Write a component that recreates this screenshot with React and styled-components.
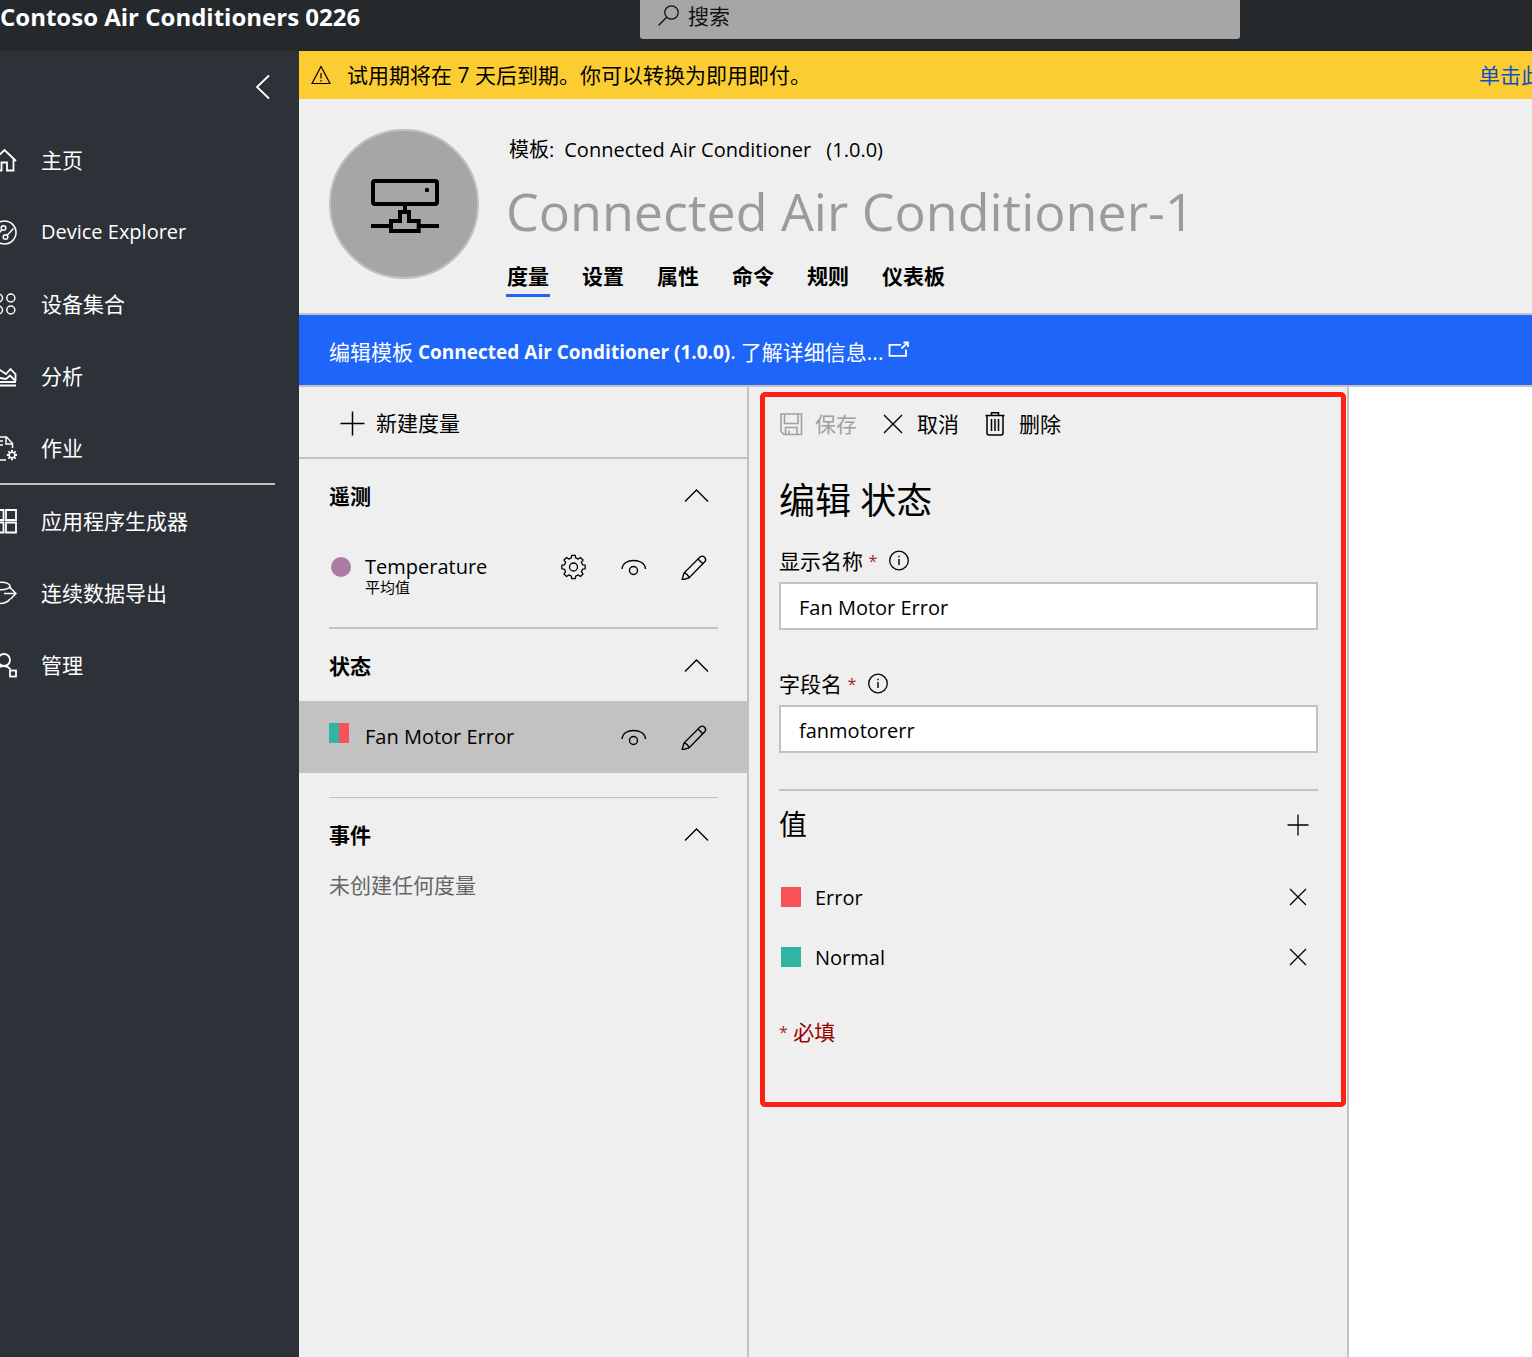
import React from "react";
import styled, { createGlobalStyle } from "styled-components";

const cjk = '"Noto Sans CJK SC", sans-serif';
const line = "#c2c2c2";

const GlobalStyle = createGlobalStyle`
  *, *::before, *::after { box-sizing: border-box; }
  body { margin: 0; background: #fff; color: #000; font: 20px/28px "Open Sans", ${cjk}; }
  button, input { font: inherit; color: inherit; }
  h1, h2, h3, p, ul { margin: 0; padding: 0; font-weight: 400; }
  ul { list-style: none; }
  a { color: inherit; text-decoration: none; }
  svg { display: block; flex: none; }
`;

const Page = styled.div`
  display: flex;
  flex-direction: column;
  min-height: 100vh;
  overflow: hidden;
`;

const TopBar = styled.header`
  display: grid;
  grid-template-columns: 640px minmax(0, 600px) 1fr;
  height: 51px;
  background: #25292c;
  color: #fff;
`;

const AppName = styled.h1`
  font-size: 24px;
  line-height: 34px;
  font-weight: 700;
  white-space: nowrap;
`;

const Search = styled.label`
  display: flex;
  align-items: center;
  gap: 9px;
  height: 39px;
  padding: 0 18px 8px;
  border-radius: 0 0 3px 3px;
  background: #a6a6a6;
  color: #111;
`;

const SearchInput = styled.input`
  flex: 1;
  min-width: 0;
  padding: 0;
  border: 0;
  outline: 0;
  background: none;
  font-size: 21px;
  &::placeholder { color: #111; opacity: 1; }
`;

const Shell = styled.div`
  display: flex;
  flex: 1;
`;

const Sidebar = styled.nav`
  flex: 0 0 299px;
  background: #2d3138;
  color: #fff;
`;

const Collapse = styled.button`
  display: flex;
  align-items: center;
  justify-content: flex-end;
  width: 100%;
  height: 73px;
  padding: 0 28px 2px;
  border: 0;
  background: none;
`;

const NavGroup = styled.ul`
  & + & {
    width: 275px;
    margin-top: -1px;
    border-top: 2px solid ${line};
  }
`;

const NavLink = styled.a`
  display: flex;
  align-items: center;
  gap: 24px;
  height: 72px;
  font-size: ${(p) => (p.$latin ? 20 : 21)}px;
`;

const NavIcon = styled.span`
  display: flex;
  justify-content: flex-end;
  width: 17px;
  overflow: hidden;
`;

const Main = styled.main`
  display: flex;
  flex-direction: column;
  flex: 1;
  min-width: 0;
`;

const Banner = styled.div`
  display: flex;
  align-items: center;
  gap: 16px;
  height: 48px;
  padding-left: 12px;
  overflow: hidden;
  background: #fccd32;
  font-size: 21px;
  white-space: nowrap;
`;

const BannerText = styled.p`
  flex: 1;
`;

const BannerLink = styled.a`
  flex: 0 0 53px;
  overflow: hidden;
  color: #0b50c4;
`;

const DeviceHeader = styled.section`
  display: flex;
  gap: 27px;
  height: 216px;
  padding: 30px 30px 0;
  border-bottom: 2px solid ${line};
  background: #efefef;
`;

const Avatar = styled.div`
  display: grid;
  place-items: center;
  flex: 0 0 150px;
  height: 150px;
  padding: 4px 0 0 2px;
  border: 2px solid #c2c2c2;
  border-radius: 50%;
  background: #a6a6a6;
`;

const DeviceInfo = styled.div`
  min-width: 0;
`;

const Template = styled.p`
  display: flex;
  gap: 10px;
  padding: 7px 3px 0;
`;

const DeviceName = styled.h2`
  margin-top: 12px;
  color: #9b9b9b;
  font-size: 52px;
  line-height: 70px;
  white-space: nowrap;
`;

const Tabs = styled.div`
  display: flex;
  gap: 31px;
  margin-top: 16px;
`;

const Tab = styled.button`
  height: 35px;
  padding: 0 1px 4px;
  border: 0;
  border-bottom: 3px solid ${(p) => (p.$active ? "#1d66f9" : "transparent")};
  background: none;
  font-size: 21px;
  font-weight: 700;
`;

const Notice = styled.p`
  display: flex;
  align-items: center;
  gap: 5px;
  height: 72px;
  padding: 3px 30px 0;
  border-bottom: 2px solid ${line};
  background: #1d66f9;
  color: #fff;
  font-size: 21px;
  white-space: nowrap;
`;

const TemplateName = styled.b`
  font-size: 19px;
  font-weight: 700;
`;

const NoticeLink = styled.a`
  display: flex;
  align-items: center;
  gap: 5px;
`;

const Columns = styled.div`
  display: flex;
  flex: 1;
`;

const Measures = styled.section`
  flex: 0 0 450px;
  border-right: 2px solid ${line};
  background: #efefef;
`;

const NewMeasure = styled.button`
  display: flex;
  align-items: center;
  gap: 11px;
  width: 100%;
  height: 72px;
  padding: 2px 0 0 41px;
  border: 0;
  border-bottom: 2px solid ${line};
  background: none;
  font-size: 21px;
`;

const Divider = styled.hr`
  margin: 24px 29px 0 30px;
  border: 0;
  border-top: ${(p) => (p.$thin ? 1 : 2)}px solid ${line};
`;

const SectionToggle = styled.button`
  display: flex;
  align-items: center;
  justify-content: space-between;
  width: 100%;
  height: 72px;
  padding: 2px 38px 0 30px;
  border: 0;
  background: none;
  font-size: 21px;
  font-weight: 700;
`;

const MeasureRow = styled.div`
  display: flex;
  align-items: flex-start;
  height: 72px;
  padding: 22px 40px 0 30px;
  background: ${(p) => (p.$selected ? "#c2c2c2" : "none")};
`;

const Marker = styled.span`
  flex: 0 0 20px;
  height: 20px;
  margin: ${(p) => (p.$round ? "4px 14px 0 2px" : "0 16px 0 0")};
  border-radius: ${(p) => (p.$round ? "50%" : 0)};
  background: ${(p) => p.$fill};
`;

const MeasureName = styled.div`
  flex: 1;
`;

const Aggregate = styled.p`
  margin-top: -4px;
  font-size: 15px;
  line-height: 20px;
`;

const RowActions = styled.div`
  display: flex;
  gap: 34px;
`;

const IconButton = styled.button`
  display: grid;
  place-items: center;
  width: 26px;
  height: 28px;
  padding: 0;
  border: 0;
  background: none;
`;

const Empty = styled.p`
  padding: 1px 30px;
  color: #666;
  font-size: 21px;
`;

const EditPanel = styled.section`
  flex: 0 1 600px;
  padding: 5px 1px 5px 11px;
  border-right: 2px solid ${line};
  background: #efefef;
`;

const Highlight = styled.form`
  padding: 0 23px 56px 14px;
  border: 5px solid #ff2012;
  border-radius: 5px;
`;

const Toolbar = styled.div`
  display: flex;
  gap: 24px;
`;

const ToolButton = styled.button`
  display: flex;
  align-items: center;
  gap: 12px;
  height: 54px;
  padding: 0 0 1px;
  border: 0;
  background: none;
  font-size: 21px;
  &:disabled { color: #a0a0a0; }
`;

const PanelTitle = styled.h2`
  margin: 26px 0 22px;
  font-size: 36px;
  line-height: 48px;
`;

const Fields = styled.div`
  display: grid;
  gap: 40px;
  padding-bottom: 36px;
  border-bottom: 2px solid ${line};
`;

const FieldLabel = styled.div`
  display: flex;
  align-items: center;
  gap: 11px;
  height: 28px;
  margin-bottom: 7px;
  font-size: 21px;
`;

const Star = styled.span`
  color: #a4262c;
  font-size: 16px;
  line-height: 16px;
  vertical-align: 2px;
`;

const TextInput = styled.input`
  display: block;
  width: 100%;
  height: 48px;
  padding: 2px 18px 0;
  border: 2px solid ${line};
  background: #fff;
  outline: 0;
`;

const ValuesHeader = styled.div`
  display: flex;
  align-items: center;
  justify-content: space-between;
  height: 68px;
  margin-bottom: 8px;
  padding-right: 7px;
`;

const ValuesTitle = styled.h3`
  padding-bottom: 2px;
  font-size: 28px;
`;

const ValueRow = styled.li`
  display: flex;
  align-items: center;
  height: 60px;
  padding: 0 7px 0 2px;
`;

const ValueSwatch = styled.span`
  flex: 0 0 20px;
  height: 20px;
  margin-right: 14px;
  background: ${(p) => p.$fill};
`;

const ValueName = styled.span`
  flex: 1;
  padding-top: 2px;
`;

const Required = styled.p`
  margin-top: 31px;
  color: #990000;
  font-size: 21px;
`;

function Icon({ size = 26, stroke = 1.5, children, ...rest }) {
  return (
    <svg width={size} height={size} viewBox={`0 0 ${size} ${size}`} fill="none" stroke="currentColor" strokeWidth={stroke} aria-hidden="true" {...rest}>
      {children}
    </svg>
  );
}

const cogPoints = (cx, cy, ro, ri, n) => {
  const pts = [];
  const step = (Math.PI * 2) / n;
  for (let i = 0; i < n; i++) {
    const a = i * step;
    [[-0.3, ri], [-0.2, ro], [0.2, ro], [0.3, ri]].forEach(([o, r]) => {
      pts.push(`${(cx + r * Math.sin(a + o * step)).toFixed(2)},${(cy - r * Math.cos(a + o * step)).toFixed(2)}`);
    });
  }
  return pts.join(" ");
};

const navIcons = {
  home: <path d="M1 13 L12.500 2 L24 13 M4 10.500 V22.500 H9.500 V14.500 H15 V22.500 H21.500 V10.500" strokeWidth="1.800" />,
  explorer: (
    <>
      <circle cx="12.500" cy="12.500" r="11.500" />
      <circle cx="11.500" cy="8" r="2.300" />
      <circle cx="13.500" cy="17" r="2.300" />
      <path d="M15.200 15.300 L21.500 8.500 M10 9.800 L4 16" />
    </>
  ),
  sets: (
    <>
      <circle cx="6.500" cy="6" r="4" />
      <circle cx="18.800" cy="6" r="4" />
      <circle cx="6.500" cy="18" r="4" />
      <circle cx="18.800" cy="18" r="4" />
    </>
  ),
  analytics: (
    <>
      <path d="M1 12 L8 6 L14 10 L18.500 5 L23.500 10 V17 M1 17 V12" strokeWidth="1.800" />
      <path d="M1 17 L8 14 L14 15 L18 11.500 L23 16.500 M0 18 H24 M0 21.500 H24" strokeWidth="1.800" />
    </>
  ),
  jobs: (
    <>
      <path d="M2 24 V1 H14.500 L20.500 7.500 V12 M14 1 V8 H20.500 M5 5 H11 M5 9 H11 M2 24 H14" />
      <circle cx="20" cy="19" r="2.800" />
      <path d="M20 13.800 V16 M20 22 V24.200 M14.800 19 H17 M23 19 H25 M16.300 15.300 L17.900 16.900 M22.100 21.100 L23.700 22.700 M23.700 15.300 L22.100 16.900 M17.900 21.100 L16.300 22.700" strokeWidth="1.800" />
    </>
  ),
  builder: <path d="M1 1 H11.500 V11 H1 Z M14 1 H24 V11 H14 Z M1 13.500 H11.500 V23.500 H1 Z M14 13.500 H24 V23.500 H14 Z" strokeWidth="1.800" />,
  exporter: (
    <>
      <ellipse cx="9.500" cy="5" rx="8.500" ry="3.800" />
      <path d="M1 5 V19 C1 24 14 24 18 18 M18 5 V8 M12 12.500 H24 M18.500 7 L24 12.500 L18.500 18" />
    </>
  ),
  admin: (
    <>
      <circle cx="12" cy="7" r="6" strokeWidth="1.800" />
      <path d="M2 22.500 C3 16.500 7 13 12 13 C15 13 17 14.500 18.500 16.500" strokeWidth="1.800" />
      <rect x="18" y="17.500" width="6" height="6" strokeWidth="1.800" />
    </>
  ),
};

const Cross = ({ r = 9, stroke = 1.4 }) => (
  <Icon size={24}>
    <path d={`M${12 - r} ${12 - r} L${12 + r} ${12 + r} M${12 + r} ${12 - r} L${12 - r} ${12 + r}`} strokeWidth={stroke} />
  </Icon>
);

const Eye = () => (
  <Icon>
    <path d="M1 15 C1.500 9 7 6.500 12.500 6.500 C18.500 6.500 24 9 24.500 15" strokeWidth="1.400" />
    <circle cx="12.500" cy="16.500" r="4" strokeWidth="1.400" />
  </Icon>
);

const Pencil = () => (
  <Icon>
    <path d="M1 26 L3 19 L19 3 C21 1.500 22.500 2.200 23.500 3.200 C24.700 4.500 25 6.500 23.500 8 L8 24 Z M17 5 L21.800 9.800 M3 19 C5 19 7.500 21.500 8 24" strokeWidth="1.400" />
  </Icon>
);

const Gear = () => (
  <Icon>
    <polygon points={cogPoints(12.5, 13, 11.8, 9.3, 8)} strokeLinejoin="round" strokeWidth="1.300" />
    <circle cx="12.500" cy="13" r="4" strokeWidth="1.300" />
  </Icon>
);

const ChevronUp = () => (
  <svg width="25" height="14" viewBox="0 0 25 14" fill="none" stroke="currentColor" strokeWidth="1.400" aria-hidden="true">
    <path d="M1 12.500 L12.500 1 L24 12.500" />
  </svg>
);

const Info = () => (
  <Icon size={22}>
    <circle cx="11" cy="10.500" r="9.300" strokeWidth="1.300" />
    <path d="M11 9 V15 M11 5.700 V7.200" strokeWidth="1.400" />
  </Icon>
);

const nav = [
  [
    ["home", "主页"],
    ["explorer", "Device Explorer", true],
    ["sets", "设备集合"],
    ["analytics", "分析"],
    ["jobs", "作业"],
  ],
  [
    ["builder", "应用程序生成器"],
    ["exporter", "连续数据导出"],
    ["admin", "管理"],
  ],
];

const tabs = ["度量", "设置", "属性", "命令", "规则", "仪表板"];

const values = [
  ["Error", "#f75356"],
  ["Normal", "#30b4a3"],
];

function Field({ id, label, value }) {
  return (
    <div>
      <FieldLabel>
        <label htmlFor={id}>
          {label} <Star>*</Star>
        </label>
        <Info />
      </FieldLabel>
      <TextInput id={id} type="text" defaultValue={value} />
    </div>
  );
}

function Section({ title, children }) {
  return (
    <section>
      <SectionToggle type="button" aria-expanded="true">
        {title}
        <ChevronUp />
      </SectionToggle>
      {children}
    </section>
  );
}

export default function App() {
  return (
    <Page>
      <GlobalStyle />
      <TopBar>
        <AppName>Contoso Air Conditioners 0226</AppName>
        <Search>
          <Icon size={21}>
            <circle cx="13.500" cy="7.500" r="6.700" strokeWidth="1.300" />
            <path d="M8.700 12.300 L0.500 20.500" strokeWidth="1.300" />
          </Icon>
          <SearchInput type="search" placeholder="搜索" />
        </Search>
      </TopBar>
      <Shell>
        <Sidebar>
          <Collapse type="button" aria-label="折叠">
            <svg width="16" height="26" viewBox="0 0 16 26" fill="none" stroke="currentColor" strokeWidth="1.800" aria-hidden="true">
              <path d="M14 1.500 L2 13 L14 24.500" />
            </svg>
          </Collapse>
          {nav.map((group, i) => (
            <NavGroup key={i}>
              {group.map(([icon, label, latin]) => (
                <li key={label}>
                  <NavLink href="#" $latin={latin}>
                    <NavIcon>
                      <Icon size={25}>{navIcons[icon]}</Icon>
                    </NavIcon>
                    {label}
                  </NavLink>
                </li>
              ))}
            </NavGroup>
          ))}
        </Sidebar>
        <Main>
          <Banner>
            <Icon size={20}>
              <path d="M10 1.500 L19 18.500 H1 Z M10 8 V13.500 M10 15 V16.500" strokeWidth="1.200" />
            </Icon>
            <BannerText>试用期将在 7 天后到期。你可以转换为即用即付。</BannerText>
            <BannerLink href="#">单击此</BannerLink>
          </Banner>
          <DeviceHeader>
            <Avatar>
              <svg width="68" height="54" viewBox="0 0 68 54" fill="none" stroke="#000" strokeWidth="4" aria-hidden="true">
                <rect x="2" y="2" width="64" height="23" rx="2" />
                <circle cx="56" cy="11" r="2.200" fill="#000" stroke="none" />
                <path d="M34 26 V32 M0 47 H20 M48 47 H68 M29 33 H38 V42 H47.700 V52 H20 V42 H29 Z" />
              </svg>
            </Avatar>
            <DeviceInfo>
              <Template>
                <span>模板:</span>
                <span>Connected Air Conditioner</span>
                <span>&nbsp;(1.0.0)</span>
              </Template>
              <DeviceName>Connected Air Conditioner-1</DeviceName>
              <Tabs role="tablist">
                {tabs.map((t, i) => (
                  <Tab key={t} type="button" role="tab" aria-selected={i === 0} $active={i === 0}>
                    {t}
                  </Tab>
                ))}
              </Tabs>
            </DeviceInfo>
          </DeviceHeader>
          <Notice>
            <span>编辑模板</span>
            <span>
              <TemplateName>Connected Air Conditioner (1.0.0)</TemplateName>.
            </span>
            <NoticeLink href="#">
              了解详细信息...
              <Icon size={22}>
                <path d="M13 3.800 H1.500 V14.800 H18 V8.500" strokeWidth="1.800" />
                <path d="M13.500 7.500 L19.500 1.800 M15.500 1.500 H20 V6" strokeWidth="1.800" />
              </Icon>
            </NoticeLink>
          </Notice>
          <Columns>
            <Measures>
              <NewMeasure type="button">
                <Icon size={25}>
                  <path d="M12.500 0.500 V24.500 M0.500 12.500 H24.500" />
                </Icon>
                新建度量
              </NewMeasure>
              <Section title="遥测">
                <MeasureRow>
                  <Marker $round $fill="#ad7ba6" />
                  <MeasureName>
                    Temperature
                    <Aggregate>平均值</Aggregate>
                  </MeasureName>
                  <RowActions>
                    <IconButton type="button" aria-label="设置"><Gear /></IconButton>
                    <IconButton type="button" aria-label="显示"><Eye /></IconButton>
                    <IconButton type="button" aria-label="编辑"><Pencil /></IconButton>
                  </RowActions>
                </MeasureRow>
                <Divider />
              </Section>
              <Section title="状态">
                <MeasureRow $selected>
                  <Marker $fill="linear-gradient(90deg, #30b4a3 50%, #f75356 50%)" />
                  <MeasureName>Fan Motor Error</MeasureName>
                  <RowActions>
                    <IconButton type="button" aria-label="显示"><Eye /></IconButton>
                    <IconButton type="button" aria-label="编辑"><Pencil /></IconButton>
                  </RowActions>
                </MeasureRow>
                <Divider $thin />
              </Section>
              <Section title="事件">
                <Empty>未创建任何度量</Empty>
              </Section>
            </Measures>
            <EditPanel>
              <Highlight onSubmit={(e) => e.preventDefault()}>
                <Toolbar>
                  <ToolButton type="submit" disabled>
                    <Icon size={24}>
                      <path d="M2 2 H22.500 V22.500 H5 L2 19.500 Z M5.500 2 V11.500 H19 V2 M6.500 22.500 V15.500 H18 V22.500 M10 22 V18.500" strokeWidth="1.600" />
                    </Icon>
                    保存
                  </ToolButton>
                  <ToolButton type="button">
                    <Cross />
                    取消
                  </ToolButton>
                  <ToolButton type="button">
                    <Icon size={24}>
                      <path d="M2.500 3.500 H21.500 M8.500 3.500 V0.800 H15.500 V3.500 M4 3.500 V21 Q4 23 6 23 H18 Q20 23 20 21 V3.500 M8.500 7 V19 M12 7 V19 M15.500 7 V19" />
                    </Icon>
                    删除
                  </ToolButton>
                </Toolbar>
                <PanelTitle>编辑 状态</PanelTitle>
                <Fields>
                  <Field id="display-name" label="显示名称" value="Fan Motor Error" />
                  <Field id="field-name" label="字段名" value="fanmotorerr" />
                </Fields>
                <ValuesHeader>
                  <ValuesTitle>值</ValuesTitle>
                  <IconButton type="button" aria-label="添加">
                    <Icon size={22}>
                      <path d="M11 0.500 V21.500 M0.500 11 H21.500" strokeWidth="1.300" />
                    </Icon>
                  </IconButton>
                </ValuesHeader>
                <ul>
                  {values.map(([name, fill]) => (
                    <ValueRow key={name}>
                      <ValueSwatch $fill={fill} />
                      <ValueName>{name}</ValueName>
                      <IconButton type="button" aria-label={`删除 ${name}`}>
                        <Cross r={8} stroke={1.2} />
                      </IconButton>
                    </ValueRow>
                  ))}
                </ul>
                <Required>
                  <Star>*</Star> 必填
                </Required>
              </Highlight>
            </EditPanel>
          </Columns>
        </Main>
      </Shell>
    </Page>
  );
}
